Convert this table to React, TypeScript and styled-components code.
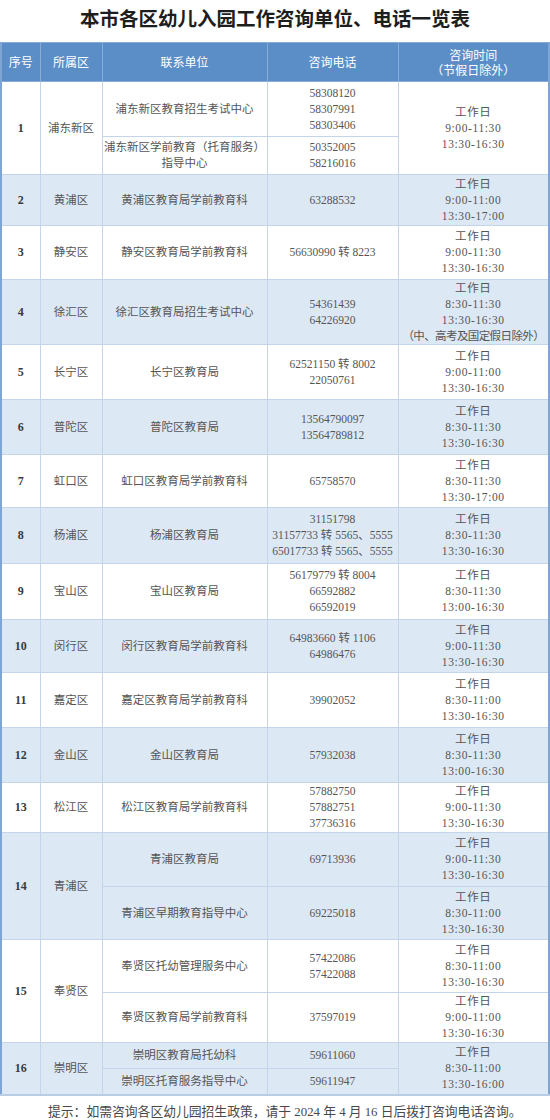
import styled, { createGlobalStyle } from 'styled-components';

const GlobalStyle = createGlobalStyle`
  html, body {
    margin: 0;
    padding: 0;
    background: #ffffff;
  }
  body {
    font-family: "Liberation Serif", "Noto Sans CJK SC", serif;
  }
`;

const Page = styled.div`
  width: 550px;
  height: 1120px;
  overflow: hidden;
  display: flex;
  flex-direction: column;
`;

const Title = styled.h1`
  margin: 0;
  height: 45px;
  box-sizing: border-box;
  padding-top: 4px;
  text-align: center;
  font-family: "Noto Sans CJK SC", sans-serif;
  font-size: 19.5px;
  font-weight: 700;
  line-height: 28px;
  color: #1e1e1e;
`;

const Table = styled.table`
  width: 550px;
  table-layout: fixed;
  border-collapse: collapse;
  border-left: 2px solid #7ea5d3;
  border-right: 2px solid #7ea5d3;
  border-bottom: 2px solid #b9cde4;
`;

const HeadRow = styled.tr`
  height: 39px;
  background: #5b8ec7;
`;

const HeadCell = styled.th`
  padding: 0;
  border: 1px solid #88acd6;
  font-family: "Noto Sans CJK SC", sans-serif;
  font-size: 12px;
  font-weight: 400;
  line-height: 15px;
  color: #ffffff;
  text-align: center;
  vertical-align: middle;
`;

const Row = styled.tr<{ $shade: boolean; $h: number }>`
  height: ${(p) => p.$h}px;
  background: ${(p) => (p.$shade ? '#dde8f5' : '#ffffff')};
`;

const Cell = styled.td`
  padding: 0 1px;
  border: 1px solid #c4d5e9;
  font-size: 11.5px;
  line-height: 16px;
  color: #555555;
  text-align: center;
  vertical-align: middle;
  white-space: nowrap;
`;

const NoCell = styled(Cell)`
  font-weight: 700;
  font-size: 12px;
  color: #3a3a3a;
`;

const TimeCell = styled(Cell)`
  letter-spacing: 0.6px;
`;

const Line = styled.div<{ $note?: boolean }>`
  letter-spacing: ${(p) => (p.$note ? '-0.6px' : 'inherit')};
`;

const Footer = styled.p`
  margin: 0;
  padding: 8px 0 0 48px;
  font-size: 12.8px;
  line-height: 16px;
  color: #484848;
  white-space: nowrap;
`;

type Unit = { name: string[]; phones: string[]; h: number; time?: string[] };
type District = { no: number; area: string; units: Unit[]; time?: string[] };

const W = '工作日';

const DISTRICTS: District[] = [
  {
    no: 1,
    area: '浦东新区',
    time: [W, '9:00-11:30', '13:30-16:30'],
    units: [
      { name: ['浦东新区教育招生考试中心'], phones: ['58308120', '58307991', '58303406'], h: 55 },
      { name: ['浦东新区学前教育（托育服务）', '指导中心'], phones: ['50352005', '58216016'], h: 38 },
    ],
  },
  {
    no: 2,
    area: '黄浦区',
    units: [{ name: ['黄浦区教育局学前教育科'], phones: ['63288532'], h: 51, time: [W, '9:00-11:00', '13:30-17:00'] }],
  },
  {
    no: 3,
    area: '静安区',
    units: [{ name: ['静安区教育局学前教育科'], phones: ['56630990 转 8223'], h: 54, time: [W, '9:00-11:30', '13:30-16:30'] }],
  },
  {
    no: 4,
    area: '徐汇区',
    units: [
      {
        name: ['徐汇区教育局招生考试中心'],
        phones: ['54361439', '64226920'],
        h: 63,
        time: [W, '8:30-11:30', '13:30-16:30', '（中、高考及国定假日除外）'],
      },
    ],
  },
  {
    no: 5,
    area: '长宁区',
    units: [{ name: ['长宁区教育局'], phones: ['62521150 转 8002', '22050761'], h: 55, time: [W, '9:00-11:00', '13:30-16:30'] }],
  },
  {
    no: 6,
    area: '普陀区',
    units: [{ name: ['普陀区教育局'], phones: ['13564790097', '13564789812'], h: 55, time: [W, '8:30-11:30', '13:30-16:30'] }],
  },
  {
    no: 7,
    area: '虹口区',
    units: [{ name: ['虹口区教育局学前教育科'], phones: ['65758570'], h: 53, time: [W, '8:30-11:30', '13:30-17:00'] }],
  },
  {
    no: 8,
    area: '杨浦区',
    units: [
      {
        name: ['杨浦区教育局'],
        phones: ['31151798', '31157733 转 5565、5555', '65017733 转 5565、5555'],
        h: 56,
        time: [W, '8:30-11:30', '13:30-16:30'],
      },
    ],
  },
  {
    no: 9,
    area: '宝山区',
    units: [
      {
        name: ['宝山区教育局'],
        phones: ['56179779 转 8004', '66592882', '66592019'],
        h: 56,
        time: [W, '8:30-11:30', '13:00-16:30'],
      },
    ],
  },
  {
    no: 10,
    area: '闵行区',
    units: [
      { name: ['闵行区教育局学前教育科'], phones: ['64983660 转 1106', '64986476'], h: 53, time: [W, '9:00-11:30', '13:30-16:30'] },
    ],
  },
  {
    no: 11,
    area: '嘉定区',
    units: [{ name: ['嘉定区教育局学前教育科'], phones: ['39902052'], h: 55, time: [W, '8:30-11:00', '13:30-16:30'] }],
  },
  {
    no: 12,
    area: '金山区',
    units: [{ name: ['金山区教育局'], phones: ['57932038'], h: 55, time: [W, '8:30-11:30', '13:00-16:30'] }],
  },
  {
    no: 13,
    area: '松江区',
    units: [
      {
        name: ['松江区教育局学前教育科'],
        phones: ['57882750', '57882751', '37736316'],
        h: 50,
        time: [W, '9:00-11:30', '13:30-16:30'],
      },
    ],
  },
  {
    no: 14,
    area: '青浦区',
    units: [
      { name: ['青浦区教育局'], phones: ['69713936'], h: 54, time: [W, '9:00-11:30', '13:30-16:30'] },
      { name: ['青浦区早期教育指导中心'], phones: ['69225018'], h: 53, time: [W, '8:30-11:00', '13:30-16:30'] },
    ],
  },
  {
    no: 15,
    area: '奉贤区',
    units: [
      { name: ['奉贤区托幼管理服务中心'], phones: ['57422086', '57422088'], h: 53, time: [W, '8:30-11:00', '13:30-16:30'] },
      { name: ['奉贤区教育局学前教育科'], phones: ['37597019'], h: 50, time: [W, '9:00-11:00', '13:30-16:30'] },
    ],
  },
  {
    no: 16,
    area: '崇明区',
    time: [W, '8:30-11:00', '13:30-16:00'],
    units: [
      { name: ['崇明区教育局托幼科'], phones: ['59611060'], h: 26 },
      { name: ['崇明区托育服务指导中心'], phones: ['59611947'], h: 27 },
    ],
  },
];

const renderLines = (lines: string[]) =>
  lines.map((t, i) => (
    <Line key={i} $note={t.startsWith('（')}>
      {t}
    </Line>
  ));

const renderDistrict = ({ no, area, units, time }: District) =>
  units.map((unit, i) => (
    <Row key={`row-${no}-${i}`} $shade={no % 2 === 0} $h={unit.h}>
      {i === 0 && <NoCell rowSpan={units.length}>{no}</NoCell>}
      {i === 0 && <Cell rowSpan={units.length}>{area}</Cell>}
      <Cell>{renderLines(unit.name)}</Cell>
      <Cell>{renderLines(unit.phones)}</Cell>
      {time
        ? i === 0 && <TimeCell rowSpan={units.length}>{renderLines(time)}</TimeCell>
        : <TimeCell>{renderLines(unit.time ?? [])}</TimeCell>}
    </Row>
  ));

const App = () => (
  <Page>
    <GlobalStyle />
    <Title>本市各区幼儿入园工作咨询单位、电话一览表</Title>
    <Table>
      <colgroup>
        <col style={{ width: 39 }} />
        <col style={{ width: 62 }} />
        <col style={{ width: 165 }} />
        <col style={{ width: 131 }} />
        <col />
      </colgroup>
      <thead>
        <HeadRow>
          <HeadCell>序号</HeadCell>
          <HeadCell>所属区</HeadCell>
          <HeadCell>联系单位</HeadCell>
          <HeadCell>咨询电话</HeadCell>
          <HeadCell>
            咨询时间
            <br />
            （节假日除外）
          </HeadCell>
        </HeadRow>
      </thead>
      <tbody>{DISTRICTS.map(renderDistrict)}</tbody>
    </Table>
    <Footer>提示：如需咨询各区幼儿园招生政策，请于 2024 年 4 月 16 日后拨打咨询电话咨询。</Footer>
  </Page>
);

export default App;
